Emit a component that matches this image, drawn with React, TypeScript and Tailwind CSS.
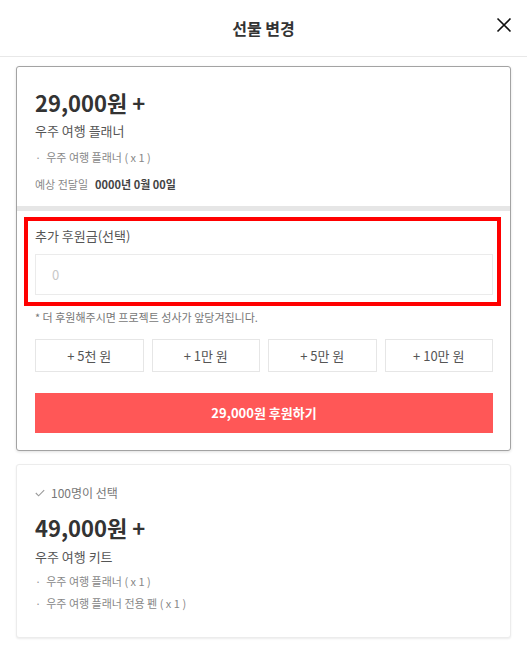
import { useState } from 'react';

const FONT = { fontFamily: '"Noto Sans CJK KR", "Noto Sans", sans-serif' };

function Items({ items }: { items: string[] }) {
  return (
    <ul className="flex flex-col gap-[6px]">
      {items.map((it) => (
        <li key={it} className="flex items-center text-[11px] leading-4 text-[#888]">
          <span className="mr-[5px] text-[#999]">·</span>
          {it}
        </li>
      ))}
    </ul>
  );
}

export default function App() {
  const [extra, setExtra] = useState('');
  const quick = ['+ 5천 원', '+ 1만 원', '+ 5만 원', '+ 10만 원'];

  return (
    <div className="min-h-[650px] w-[527px] bg-white text-[#333]" style={FONT}>
      <header className="relative flex h-[57px] items-center justify-center border-b border-[#e8e8e8]">
        <h1 className="text-[16px] font-bold text-[#333]">선물 변경</h1>
        <button className="absolute right-[15px] top-[17px] flex h-[16px] w-[16px] items-center justify-center">
          <svg width="16" height="16" viewBox="0 0 16 16" fill="none" stroke="#111" strokeWidth="1.6">
            <path d="M1.5 1.5 L14.5 14.5 M14.5 1.5 L1.5 14.5" />
          </svg>
        </button>
      </header>

      <div className="flex flex-col gap-[13px] px-[16px] pt-[9px]">
        {/* selected reward */}
        <section className="rounded-[3px] border border-[#a3a3a3] bg-white shadow-[0_1px_3px_rgba(0,0,0,0.12)]">
          <div className="pb-[14px] pl-[18px] pt-[20px]">
            <div className="text-[22px] font-bold leading-[30px] text-[#333]">29,000원 +</div>
            <div className="mt-[4px] text-[13px] leading-5 text-[#555]">우주 여행 플래너</div>
            <div className="mt-[8px]">
              <Items items={['우주 여행 플래너 ( x 1 )']} />
            </div>
            <div className="mt-[11px] flex items-center text-[11px] leading-4">
              <span className="text-[#888]">예상 전달일</span>
              <span className="ml-[7px] font-bold text-[#444]">0000년 0월 00일</span>
            </div>
          </div>

          <div className="h-[5px] bg-[#e6e6e6]" />

          <div className="pb-[17px] pl-[7px] pr-[9px] pt-[6px]">
            <div className="border-4 border-[#ff0000] pb-[7px] pl-[7px] pr-[4px] pt-[5px]">
              <label className="block text-[13px] leading-5 text-[#555]">추가 후원금(선택)</label>
              <input
                value={extra}
                onChange={(e) => setExtra(e.target.value)}
                placeholder="0"
                className="mt-[8px] h-[41px] w-full border border-[#ebebeb] px-[16px] text-[13px] text-[#333] outline-none placeholder:text-[#c8c8c8]"
              />
            </div>

            <div className="pl-[11px] pr-[8px]">
              <p className="mt-[3px] text-[11px] leading-4 text-[#777]">* 더 후원해주시면 프로젝트 성사가 앞당겨집니다.</p>

              <div className="mt-[14px] grid grid-cols-4 gap-[8px]">
                {quick.map((q) => (
                  <button
                    key={q}
                    className="h-[33px] border border-[#e6e6e6] bg-white text-[13px] text-[#555]"
                  >
                    {q}
                  </button>
                ))}
              </div>

              <button className="mt-[21px] h-[40px] w-full bg-[#ff5757] text-[13px] font-bold text-white">
                29,000원 후원하기
              </button>
            </div>
          </div>
        </section>

        {/* other reward */}
        <section className="rounded-[3px] border border-[#ececec] bg-white pb-[26px] pl-[18px] pt-[19px] shadow-[0_1px_2px_rgba(0,0,0,0.08)]">
          <div className="flex items-center text-[12px] leading-[18px] text-[#777]">
            <svg width="10" height="8" viewBox="0 0 10 8" fill="none" stroke="#999" strokeWidth="1.1" className="mr-[6px]">
              <path d="M0.8 4 L3.6 6.8 L9.2 1.2" />
            </svg>
            100명이 선택
          </div>
          <div className="mt-[10px] text-[22px] font-bold leading-[30px] text-[#333]">49,000원 +</div>
          <div className="mt-[5px] text-[13px] leading-5 text-[#555]">우주 여행 키트</div>
          <div className="mt-[6px]">
            <Items items={['우주 여행 플래너 ( x 1 )', '우주 여행 플래너 전용 펜 ( x 1 )']} />
          </div>
        </section>
      </div>
    </div>
  );
}
